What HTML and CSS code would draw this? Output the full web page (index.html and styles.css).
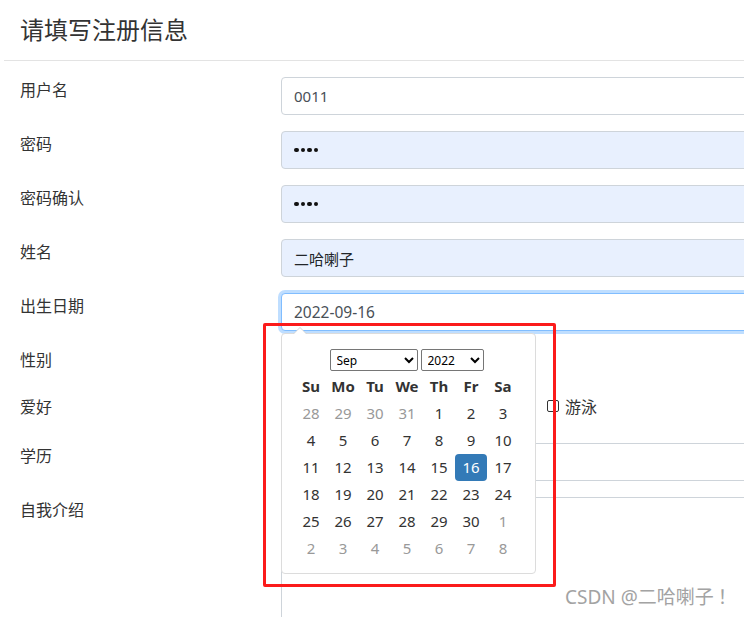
FILE: index.html
```html
<!DOCTYPE html>
<html lang="zh-CN">
<head>
<meta charset="utf-8">
<title>请填写注册信息</title>
<link rel="stylesheet" href="styles.css">
</head>
<body>
<div class="page">
  <div class="header"><h4 class="title">请填写注册信息</h4></div>
  <form class="form">
    <div class="row">
      <label class="label">用户名</label>
      <div class="ctrl"><div class="input">0011</div></div>
    </div>
    <div class="row">
      <label class="label">密码</label>
      <div class="ctrl"><div class="input autofill"><span class="dots"><i></i><i></i><i></i><i></i></span></div></div>
    </div>
    <div class="row">
      <label class="label">密码确认</label>
      <div class="ctrl"><div class="input autofill"><span class="dots"><i></i><i></i><i></i><i></i></span></div></div>
    </div>
    <div class="row">
      <label class="label">姓名</label>
      <div class="ctrl"><div class="input autofill dark">二哈喇子</div></div>
    </div>
    <div class="row">
      <label class="label">出生日期</label>
      <div class="ctrl date-ctrl">
        <div class="input focus">2022-09-16</div>
        <div class="picker">
          <div class="picker-selects">
            <select class="sel sel-month"><option>Sep</option></select>
            <select class="sel sel-year"><option>2022</option></select>
          </div>
          <div class="cal">
            <span class="dow">Su</span><span class="dow">Mo</span><span class="dow">Tu</span><span class="dow">We</span><span class="dow">Th</span><span class="dow">Fr</span><span class="dow">Sa</span>
            <span class="day old">28</span><span class="day old">29</span><span class="day old">30</span><span class="day old">31</span><span class="day">1</span><span class="day">2</span><span class="day">3</span>
            <span class="day">4</span><span class="day">5</span><span class="day">6</span><span class="day">7</span><span class="day">8</span><span class="day">9</span><span class="day">10</span>
            <span class="day">11</span><span class="day">12</span><span class="day">13</span><span class="day">14</span><span class="day">15</span><span class="day active">16</span><span class="day">17</span>
            <span class="day">18</span><span class="day">19</span><span class="day">20</span><span class="day">21</span><span class="day">22</span><span class="day">23</span><span class="day">24</span>
            <span class="day">25</span><span class="day">26</span><span class="day">27</span><span class="day">28</span><span class="day">29</span><span class="day">30</span><span class="day old">1</span>
            <span class="day old">2</span><span class="day old">3</span><span class="day old">4</span><span class="day old">5</span><span class="day old">6</span><span class="day old">7</span><span class="day old">8</span>
          </div>
        </div>
      </div>
    </div>
    <div class="row row-radio">
      <label class="label">性别</label>
      <div class="ctrl inline-opts radios">
        <span class="radio"></span>
        <span class="radio"></span>
      </div>
    </div>
    <div class="row row-check">
      <label class="label">爱好</label>
      <div class="ctrl inline-opts checks">
        <span class="check"></span>
        <span class="check"></span>
        <span class="opt"><span class="check"></span>游泳</span>
      </div>
    </div>
    <div class="row">
      <label class="label">学历</label>
      <div class="ctrl"><div class="input"></div></div>
    </div>
    <div class="row">
      <label class="label">自我介绍</label>
      <div class="ctrl"><div class="input textarea"></div></div>
    </div>
  </form>
  <div class="annot"></div>
  <div class="watermark">CSDN @二哈喇子<span class="excl">！</span></div>
</div>
</body>
</html>
```
FILE: styles.css
```css
html, body {
  margin: 0;
  padding: 0;
  background: #fff;
}
body {
  width: 744px;
  height: 617px;
  overflow: hidden;
  font-family: "Noto Sans", "Noto Sans CJK SC", sans-serif;
  color: #212529;
}
.page {
  position: relative;
  width: 744px;
  height: 617px;
  overflow: hidden;
}
.header {
  margin-left: 4px;
  padding: 14px 0 17px 16px;
  border-bottom: 1px solid #e3e3e3;
}
.title {
  margin: 0;
  font-family: "Noto Sans CJK SC", sans-serif;
  font-size: 24px;
  line-height: 29px;
  font-weight: 400;
  color: #333;
}
.form {
  padding: 16px 0 0 20px;
  display: flex;
  flex-direction: column;
  gap: 16px;
}
.row {
  display: flex;
  align-items: flex-start;
}
.label {
  width: 261px;
  flex: none;
  font-family: "Noto Sans CJK SC", sans-serif;
  font-size: 16px;
  line-height: 24px;
  color: #333;
}
.ctrl {
  width: 600px;
  flex: none;
}
.date-ctrl {
  position: relative;
}
.input {
  box-sizing: border-box;
  height: 38px;
  border: 1px solid #ced4da;
  border-radius: 4px;
  padding: 0 12px;
  display: flex;
  align-items: center;
  font-size: 15px;
  color: #495057;
  background: #fff;
}
.focus {
  font-size: 15.5px;
  border-color: #80bdff;
  box-shadow: 0 0 0 3px rgba(0, 123, 255, 0.25);
}
.autofill {
  background: #e8f0fe;
}
.dark {
  color: #212529;
  font-family: "Noto Sans CJK SC", sans-serif;
}
.textarea {
  height: 140px;
}
.dots {
  display: inline-flex;
  gap: 2px;
}
.dots i {
  width: 4.5px;
  height: 4.5px;
  border-radius: 50%;
  background: #111;
}
.row-radio .ctrl { height: 31px; }
.row-check .ctrl { height: 33px; }
.inline-opts {
  display: flex;
  align-items: flex-start;
  box-sizing: border-box;
  font-family: "Noto Sans CJK SC", sans-serif;
  font-size: 16px;
  line-height: 24px;
  color: #333;
}
.radios {
  gap: 120px;
  padding-top: 6px;
}
.checks {
  gap: 121px;
}
.checks > .check {
  margin-top: 6px;
}
.opt {
  display: inline-flex;
  align-items: center;
  gap: 6px;
}
.radio {
  width: 12px;
  height: 12px;
  border: 1px solid #333;
  border-radius: 50%;
}
.check {
  width: 10px;
  height: 10px;
  border: 1px solid #333;
  border-radius: 2px;
}
/* date picker popup */
.picker {
  position: absolute;
  left: 0;
  top: 40px;
  width: 255px;
  box-sizing: border-box;
  padding: 15px 17px 11px 13px;
  background: #fff;
  border: 1px solid #dcdcdc;
  border-radius: 4px;
  z-index: 5;
}
.picker::before,
.picker::after {
  content: "";
  position: absolute;
  width: 0;
  height: 0;
  border-left: 7px solid transparent;
  border-right: 7px solid transparent;
}
.picker::before {
  left: 11px;
  top: -7px;
  border-bottom: 7px solid #d6d6d6;
}
.picker::after {
  left: 12px;
  top: -6px;
  border-left-width: 6px;
  border-right-width: 6px;
  border-bottom: 6px solid #fff;
}
.picker-selects {
  display: flex;
  justify-content: center;
  gap: 3px;
  height: 22px;
  margin-bottom: 2px;
}
.sel {
  box-sizing: border-box;
  height: 22px;
  font-family: "Noto Sans", sans-serif;
  font-size: 12px;
  color: #000;
  border: 1px solid #767676;
  border-radius: 2px;
  background: #fff;
  padding: 0 2px;
}
.sel-month { width: 88px; }
.sel-year { width: 63px; }
.cal {
  display: grid;
  grid-template-columns: repeat(7, 32px);
  grid-auto-rows: 27px;
}
.cal span {
  display: flex;
  align-items: center;
  justify-content: center;
  font-size: 15px;
  line-height: 1;
  color: #333;
}
.cal .dow {
  font-weight: 700;
}
.cal .old {
  color: #999;
}
.cal .active {
  background: #337ab7;
  color: #fff;
  border-radius: 4px;
}
.annot {
  position: absolute;
  left: 263px;
  top: 323px;
  width: 293px;
  height: 264px;
  box-sizing: border-box;
  border: 3px solid #fb1b1b;
  border-radius: 2px;
  z-index: 6;
}
.watermark {
  position: absolute;
  left: 565px;
  top: 585px;
  font-family: "Noto Sans", "Noto Sans CJK SC", sans-serif;
  font-size: 19px;
  line-height: 24px;
  color: #a3a3a3;
  white-space: nowrap;
  z-index: 7;
}
.excl {
  margin-left: 4px;
}
```
